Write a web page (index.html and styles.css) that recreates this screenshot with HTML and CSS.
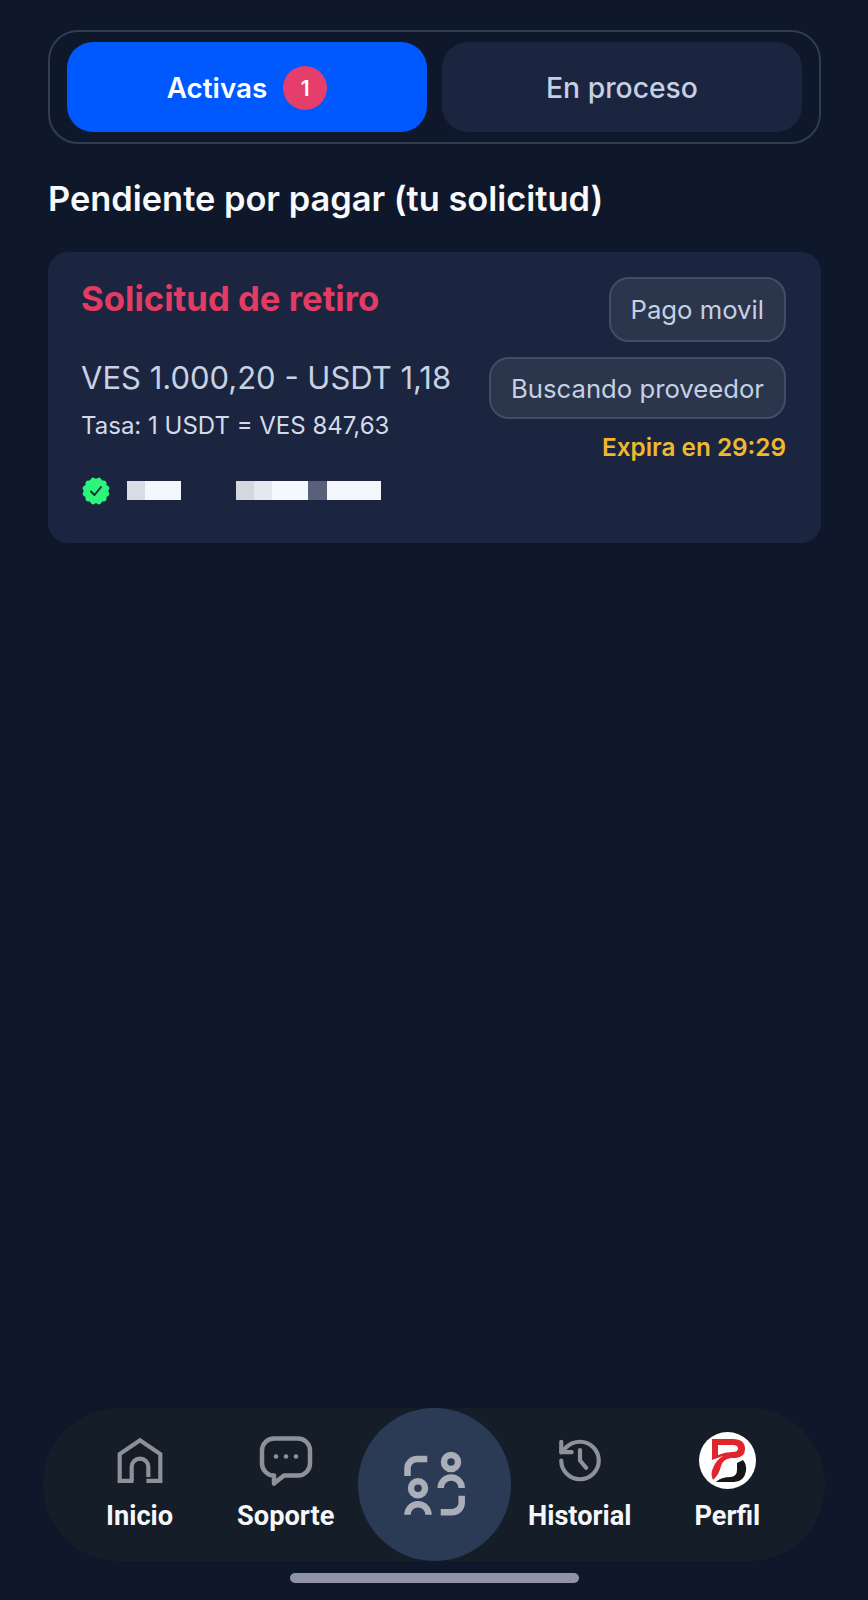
FILE: index.html
```html
<!DOCTYPE html>
<html lang="es">

<head>
    <meta charset="UTF-8">
    <meta name="viewport" content="width=device-width, initial-scale=1.0">
    <title>Ordenes</title>
    <link rel="stylesheet" href="styles.css">
</head>

<body>
    <main class="content">
        <!-- tabs -->
        <div class="tabs">
            <div class="tab tab-active">
                <span>Activas</span>
                <span class="tab-count">1</span>
            </div>
            <div class="tab">En proceso</div>
        </div>

        <h1 class="section-title">Pendiente por pagar (tu solicitud)</h1>

        <!-- order card -->
        <section class="card">
            <div class="card-left">
                <h2 class="card-title">Solicitud de retiro</h2>
                <p class="amount">VES 1.000,20 - USDT 1,18</p>
                <p class="rate">Tasa: 1 USDT = VES 847,63</p>
                <div class="user">
                    <svg class="verified" viewBox="0 0 28 28">
                        <g fill="#2df57b">
                            <rect x="3.5" y="3.5" width="21" height="21" rx="3"/>
                            <rect x="3.5" y="3.5" width="21" height="21" rx="3" transform="rotate(30 14 14)"/>
                            <rect x="3.5" y="3.5" width="21" height="21" rx="3" transform="rotate(60 14 14)"/>
                        </g>
                        <path d="M9 14.5l3.5 3.5 6.5-8" fill="none" stroke="#14233a" stroke-width="1.8" stroke-linecap="round" stroke-linejoin="round"/>
                    </svg>
                    <span class="hidden-name hidden-first"></span>
                    <span class="hidden-name hidden-last"></span>
                </div>
            </div>
            <div class="card-right">
                <span class="pill pill-method">Pago movil</span>
                <span class="pill pill-status">Buscando proveedor</span>
                <span class="expires">Expira en 29:29</span>
            </div>
        </section>
    </main>

    <!-- bottom navigation -->
    <nav class="nav">
        <div class="nav-group nav-left">
            <div class="nav-item">
                <svg class="nav-icon" width="48" height="50" viewBox="0 0 52 50" fill="none" stroke="#8e9198" stroke-width="4.500">
                    <path d="M19 47H4V18L26 3l22 15v29H33"/>
                    <path d="M17 47V32a9 9 0 0 1 18 0v11"/>
                </svg>
                <span>Inicio</span>
            </div>
            <div class="nav-item">
                <svg class="nav-icon" width="54" height="50" viewBox="0 0 54 50" fill="none" stroke="#8e9198" stroke-width="4.500" stroke-linejoin="round">
                    <path d="M15 3h24a12 12 0 0 1 12 12v13a12 12 0 0 1-12 12H25l-10 8v-8a12 12 0 0 1-12-12V15A12 12 0 0 1 15 3z"/>
                    <g fill="#8e9198" stroke="none">
                        <circle cx="17" cy="21" r="2.300"/>
                        <circle cx="27" cy="21" r="2.300"/>
                        <circle cx="37" cy="21" r="2.300"/>
                    </g>
                </svg>
                <span>Soporte</span>
            </div>
        </div>

        <div class="nav-center">
            <svg width="73" height="73" viewBox="-2 -1 73 73" fill="none" stroke="#a9aeb9" stroke-width="6.500">
                <path d="M27.3 10H17a9.5 9.5 0 0 0-9.5 9.5V27"/>
                <circle cx="51" cy="13" r="7"/>
                <path d="M40.7 39a10.5 10.5 0 0 1 21 0"/>
                <circle cx="18" cy="39.3" r="7"/>
                <path d="M7.5 65.7a10.5 10.5 0 0 1 21 0"/>
                <path d="M61.7 46.7v7a9.5 9.5 0 0 1-9.5 9.5H40.7"/>
            </svg>
        </div>

        <div class="nav-group nav-right">
            <div class="nav-item">
                <svg class="nav-icon" width="50" height="48" viewBox="0 0 24 23" fill="none" stroke="#8e9198" stroke-width="2" stroke-linecap="round" stroke-linejoin="round">
                    <path d="M3 11.500a9 9 0 1 0 9-9 9.750 9.750 0 0 0-6.740 2.740L3 7.500"/>
                    <path d="M3 2.500v5h5"/>
                    <path d="M12 6.500v5l3 3.500"/>
                </svg>
                <span>Historial</span>
            </div>
            <div class="nav-item">
                <svg class="nav-icon" width="57" height="57" viewBox="0 0 57 57">
                    <circle cx="28.500" cy="28.500" r="28.500" fill="#fff"/>
                    <path fill="#e0262c" fill-rule="evenodd" d="M13 7H34Q46 7 46 17Q46 25 37 26L32 26Q24 27 22 34Q20 43 14 48Q11 42 14 36Q17 28 24 24L13 28ZM19 13V23Q26 20 33 20Q39 20 39 16.500Q39 13 34 13Z"/>
                    <path fill="#16161a" d="M17 50Q22 45 32 45Q38 44 38 38V31L44 28Q48 33 47 39Q45 50 35 50Z"/>
                </svg>
                <span>Perfil</span>
            </div>
        </div>
    </nav>

    <div class="home-bar"></div>
</body>

</html>
```

FILE: styles.css
```css
* {
    margin: 0;
    padding: 0;
    box-sizing: border-box;
}

body {
    width: 868px;
    height: 1600px;
    background-color: #0f172a;
    font-family: "Inter", "Liberation Sans", sans-serif;
    display: flex;
    flex-direction: column;
    overflow: hidden;
}

.content {
    flex: 1;
    padding: 30px 47px 0 48px;
}

/* tabs */
.tabs {
    height: 114px;
    display: flex;
    gap: 15px;
    padding: 10px 17px;
    border: 2px solid #323d50;
    border-radius: 30px;
}

.tab {
    flex: 1;
    display: flex;
    align-items: center;
    justify-content: center;
    gap: 16px;
    padding-top: 2px;
    background-color: #1b2540;
    border-radius: 26px;
    color: #c5d0e2;
    font-size: 28.3px;
    font-weight: 500;
}

.tab-active {
    background-color: #0059ff;
    color: #fff;
    font-size: 27.8px;
    font-weight: 600;
}

.tab-count {
    width: 44px;
    height: 44px;
    border-radius: 50%;
    background-color: #e53e6a;
    display: flex;
    align-items: center;
    justify-content: center;
    font-size: 21px;
}

.section-title {
    margin-top: 35px;
    color: #f7f9fc;
    font-size: 34.4px;
    font-weight: 600;
    line-height: 40px;
}

/* order card */
.card {
    margin-top: 33px;
    height: 291px;
    display: flex;
    justify-content: space-between;
    padding: 25px 35px 0 33px;
    background-color: #1b2540;
    border-radius: 20px;
}

.card-title {
    color: #e23b64;
    font-size: 34.7px;
    font-weight: 700;
    line-height: 40px;
    margin-top: 1px;
}

.amount {
    margin-top: 40px;
    color: #c8d2e3;
    font-size: 31px;
    line-height: 40px;
}

.rate {
    margin-top: 12px;
    color: #d3dbe8;
    font-size: 24px;
    line-height: 32px;
}

.user {
    margin-top: 35px;
    display: flex;
    align-items: center;
}

.verified {
    width: 28px;
    height: 28px;
    margin-left: 1px;
}

.hidden-name {
    height: 19px;
    margin-top: -1px;
}

.hidden-first {
    width: 54px;
    margin-left: 17px;
    background: linear-gradient(90deg, #d9dce6 33%, #f3f6fb 33%);
}

.hidden-last {
    width: 145px;
    margin-left: 55px;
    background: linear-gradient(90deg, #d5d7de 12.500%, #e5e8ee 12.500%, #e5e8ee 25%, #f5f8fd 25%, #f5f8fd 50%, #5a6079 50%, #5a6079 62.500%, #f3f7fc 62.500%);
}

.card-right {
    display: flex;
    flex-direction: column;
    align-items: flex-end;
}

.pill {
    display: flex;
    align-items: center;
    padding: 0 20px;
    background-color: #2b354c;
    border: 2px solid #434d66;
    border-radius: 20px;
    color: #c5d0e2;
    font-size: 25.7px;
}

.pill-method {
    height: 65px;
}

.pill-status {
    height: 62px;
    margin-top: 15px;
}

.expires {
    margin-top: 13px;
    color: #f0b92d;
    font-size: 24.3px;
    font-weight: 600;
    line-height: 30px;
}

/* bottom navigation */
.nav {
    height: 153px;
    margin: 0 43px;
    display: flex;
    background-color: #151e28;
    border-radius: 76px;
}

.nav-group {
    display: flex;
    gap: 64px;
}

.nav-left {
    width: 315px;
    padding-left: 63px;
}

.nav-right {
    padding-left: 17px;
    gap: 63px;
}

.nav-item {
    display: flex;
    flex-direction: column;
    align-items: center;
    color: #f4f6fa;
    font-family: "Roboto", "Liberation Sans", sans-serif;
    font-size: 27.2px;
    font-weight: 700;
    line-height: 32px;
}

.nav-icon {
    height: 57px;
    margin-top: 24px;
    margin-bottom: 11px;
}

.nav-center {
    width: 153px;
    height: 153px;
    background-color: #2b3a55;
    border-radius: 50%;
    display: flex;
    align-items: center;
    justify-content: center;
}

.home-bar {
    width: 289px;
    height: 10px;
    margin: 12px auto 17px;
    background-color: #8f93a3;
    border-radius: 5px;
}
```
